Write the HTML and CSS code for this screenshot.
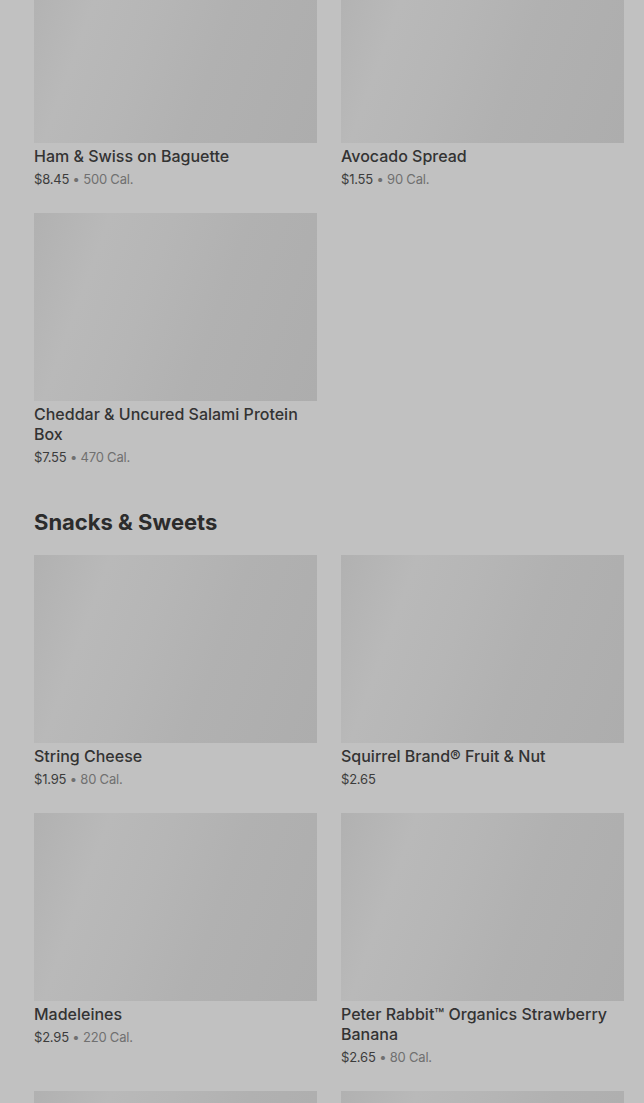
FILE: index.html
```html
<!DOCTYPE html>
<html lang="en">
<head>
<meta charset="utf-8">
<title>Menu</title>
<link rel="stylesheet" href="styles.css">
</head>
<body>
<main class="menu">
  <section class="section section-first">
    <div class="grid">
      <div class="card">
        <div class="thumb"></div>
        <div class="title">Ham &amp; Swiss on Baguette</div>
        <div class="meta"><span class="price">$8.45</span> <span class="cal">• 500 Cal.</span></div>
      </div>
      <div class="card">
        <div class="thumb"></div>
        <div class="title">Avocado Spread</div>
        <div class="meta"><span class="price">$1.55</span> <span class="cal">• 90 Cal.</span></div>
      </div>
      <div class="card">
        <div class="thumb"></div>
        <div class="title">Cheddar &amp; Uncured Salami Protein Box</div>
        <div class="meta"><span class="price">$7.55</span> <span class="cal">• 470 Cal.</span></div>
      </div>
    </div>
  </section>
  <section class="section">
    <h2 class="heading">Snacks &amp; Sweets</h2>
    <div class="grid">
      <div class="card">
        <div class="thumb"></div>
        <div class="title">String Cheese</div>
        <div class="meta"><span class="price">$1.95</span> <span class="cal">• 80 Cal.</span></div>
      </div>
      <div class="card">
        <div class="thumb"></div>
        <div class="title">Squirrel Brand® Fruit &amp; Nut</div>
        <div class="meta"><span class="price">$2.65</span></div>
      </div>
      <div class="card">
        <div class="thumb"></div>
        <div class="title">Madeleines</div>
        <div class="meta"><span class="price">$2.95</span> <span class="cal">• 220 Cal.</span></div>
      </div>
      <div class="card">
        <div class="thumb"></div>
        <div class="title">Peter Rabbit™ Organics Strawberry Banana</div>
        <div class="meta"><span class="price">$2.65</span> <span class="cal">• 80 Cal.</span></div>
      </div>
      <div class="card">
        <div class="thumb"></div>
      </div>
      <div class="card">
        <div class="thumb"></div>
      </div>
    </div>
  </section>
</main>
</body>
</html>
```

FILE: styles.css
```css
html, body {
  margin: 0;
  padding: 0;
  background: #c1c1c1;
}
body {
  font-family: Inter, "Liberation Sans", sans-serif;
  color: #333333;
  overflow: hidden;
  height: 1103px;
}
.menu {
  padding: 0 20px 0 34px;
  margin-top: -45px;
}
.section-first {
  padding-bottom: 42px;
}
.heading {
  margin: 0 0 19px;
  font-size: 22px;
  line-height: 28px;
  font-weight: 700;
  color: #2c2c2c;
  letter-spacing: 0;
}
.grid {
  display: grid;
  grid-template-columns: 283px 283px;
  column-gap: 24px;
  row-gap: 25px;
  align-items: start;
}
.thumb {
  height: 188px;
  background: linear-gradient(110deg, #b1b1b1 0%, #b9b9b9 22%, #b6b6b6 40%, #b1b1b1 62%, #adadad 100%);
}
.title {
  margin-top: 3px;
  font-size: 16px;
  line-height: 20px;
  font-weight: 500;
  color: #333333;
}
.meta {
  margin-top: 4px;
  font-size: 13px;
  line-height: 18px;
  letter-spacing: -0.2px;
}
.price {
  color: #3c3c3c;
}
.cal {
  color: #707070;
}
```
